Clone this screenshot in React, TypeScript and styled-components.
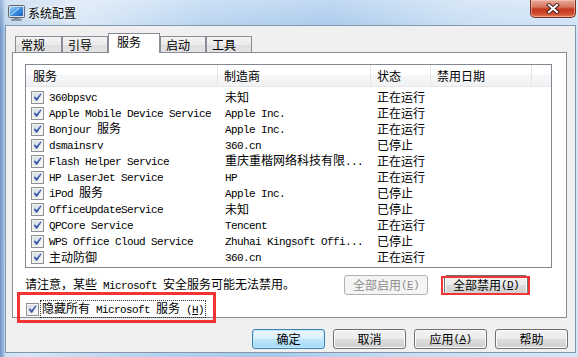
import React from 'react';
import styled, { createGlobalStyle, css } from 'styled-components';

const CJK = '"Noto Sans CJK SC", "Noto Sans CJK JP", "Liberation Sans", sans-serif';

const GlobalStyle = createGlobalStyle`
  html, body {
    margin: 0;
    padding: 0;
  }
  body {
    font-family: ${CJK};
    font-size: 12px;
    color: #000;
  }
`;

interface ServiceRow {
  name: string;
  vendor: string;
  status: string;
}

const services: ServiceRow[] = [
  { name: '360bpsvc', vendor: '未知', status: '正在运行' },
  { name: 'Apple Mobile Device Service', vendor: 'Apple Inc.', status: '正在运行' },
  { name: 'Bonjour 服务', vendor: 'Apple Inc.', status: '正在运行' },
  { name: 'dsmainsrv', vendor: '360.cn', status: '已停止' },
  { name: 'Flash Helper Service', vendor: '重庆重楷网络科技有限...', status: '正在运行' },
  { name: 'HP LaserJet Service', vendor: 'HP', status: '正在运行' },
  { name: 'iPod 服务', vendor: 'Apple Inc.', status: '已停止' },
  { name: 'OfficeUpdateService', vendor: '未知', status: '已停止' },
  { name: 'QPCore Service', vendor: 'Tencent', status: '正在运行' },
  { name: 'WPS Office Cloud Service', vendor: 'Zhuhai Kingsoft Offi...', status: '已停止' },
  { name: '主动防御', vendor: '360.cn', status: '正在运行' },
];

const tabs = [
  { label: '常规', width: 47 },
  { label: '引导', width: 46 },
  { label: '服务', width: 52, active: true },
  { label: '启动', width: 46 },
  { label: '工具', width: 46 },
];

const Frame = styled.div`
  position: relative;
  box-sizing: border-box;
  width: 578px;
  height: 357px;
  padding: 0 2px 4px 5px;
  display: flex;
  flex-direction: column;
  overflow: hidden;
  background:
    linear-gradient(180deg, rgba(255, 255, 255, 0.3), rgba(255, 255, 255, 0) 30px),
    linear-gradient(90deg, #6f93c4 0px, #9dbde2 4px, rgba(157, 189, 226, 0) 5px),
    linear-gradient(100deg, #bcd3ea 0%, #d6e6f6 14%, #b7d3f0 32%, #a8c9ec 52%, #c7ddf3 72%, #d5e6f7 100%);
`;

const TitleBar = styled.div`
  flex: none;
  height: 25px;
  display: flex;
  align-items: flex-start;
`;

const AppIcon = styled.svg`
  flex: none;
  margin: 5px 0 0 2px;
`;

const Title = styled.div`
  margin: 6px 0 0 2px;
  font-size: 12px;
  line-height: 14px;
  color: #000;
  text-shadow: 0 0 6px #fff, 0 0 10px rgba(255, 255, 255, 0.9);
`;

const CloseButton = styled.div`
  margin-left: auto;
  box-sizing: border-box;
  width: 46px;
  height: 18px;
  display: flex;
  align-items: center;
  justify-content: center;
  border: 1px solid #7a2f22;
  border-top: none;
  border-radius: 0 0 5px 5px;
  background: linear-gradient(180deg, #e9aa99 0%, #d77660 40%, #c4371f 55%, #cf4d31 80%, #e07a55 100%);
  box-shadow: inset 0 0 0 1px rgba(255, 220, 210, 0.45);
`;

const Client = styled.div`
  flex: 1;
  box-sizing: border-box;
  border: 1px solid #8397ad;
  background: #f0f0f0;
  padding: 7px 8px 3px 6px;
  display: flex;
  flex-direction: column;
`;

const TabStrip = styled.div`
  position: relative;
  z-index: 1;
  height: 19px;
  margin-left: 3px;
  display: flex;
  align-items: flex-end;
`;

const Tab = styled.div<{ $width: number; $active?: boolean }>`
  box-sizing: border-box;
  width: ${(p) => p.$width}px;
  height: 16px;
  padding: 0 0 0 5px;
  border: 1px solid #898c95;
  border-bottom: none;
  background: linear-gradient(180deg, #f3f3f3 0%, #ebebeb 50%, #dedede 51%, #e4e4e4 100%);
  font-size: 12px;
  line-height: 15px;
  ${(p) =>
    p.$active &&
    css`
      height: 20px;
      margin-bottom: -1px;
      padding-left: 8px;
      line-height: 16px;
      background: #fff;
    `}
`;

const Panel = styled.div`
  box-sizing: border-box;
  height: 266px;
  border: 1px solid #898c95;
  background: #fff;
  padding: 11px 14px 0 12px;
  display: flex;
  flex-direction: column;
`;

const ListBox = styled.div`
  box-sizing: border-box;
  height: 204px;
  border: 1px solid #828790;
  display: flex;
  flex-direction: column;
`;

const HeaderRow = styled.div`
  flex: none;
  height: 22px;
  box-sizing: border-box;
  display: flex;
  border-bottom: 1px solid #e5e5e5;
  background: linear-gradient(180deg, #ffffff 0%, #ffffff 45%, #f6f7f8 46%, #f1f2f4 100%);
`;

const HeaderCell = styled.div<{ $width?: number }>`
  box-sizing: border-box;
  ${(p) => (p.$width ? `width: ${p.$width}px;` : 'flex: 1;')}
  padding-left: ${(p) => (p.$width === 192 ? 7 : 6)}px;
  border-right: 1px solid #e3e5e8;
  font-size: 12px;
  line-height: 21px;
  white-space: nowrap;
  &:last-child {
    border-right: none;
  }
`;

const Rows = styled.div`
  padding: 2px 0 2px;
`;

const Row = styled.div`
  height: 16px;
  display: flex;
  align-items: center;
  line-height: 16px;
  white-space: nowrap;
`;

const NameCell = styled.div`
  box-sizing: border-box;
  width: 192px;
  padding-left: 5px;
  display: flex;
  align-items: center;
  gap: 5px;
`;

const Cell = styled.div<{ $width: number; $pad: number }>`
  box-sizing: border-box;
  width: ${(p) => p.$width}px;
  padding-left: ${(p) => p.$pad}px;
  overflow: hidden;
`;

const Latin = styled.span`
  font-family: "Liberation Mono", monospace;
  font-size: 11px;
  letter-spacing: -0.6px;
`;

const Han = styled.span`
  font-family: ${CJK};
  font-size: 12px;
`;

const ActionRow = styled.div`
  margin-top: 7px;
  height: 20px;
  display: flex;
  align-items: center;
`;

const Note = styled.div`
  flex: 1;
  line-height: 16px;
  white-space: nowrap;
`;

const ButtonPair = styled.div`
  display: flex;
  gap: 16px;
  margin-right: 24px;
`;

const PushButton = styled.div<{ $width: number; $disabled?: boolean; $default?: boolean }>`
  box-sizing: border-box;
  width: ${(p) => p.$width}px;
  height: 20px;
  display: flex;
  align-items: center;
  justify-content: center;
  border: 1px solid #707070;
  border-radius: 3px;
  background: linear-gradient(180deg, #f2f2f2 0%, #ebebeb 50%, #dddddd 51%, #cfcfcf 100%);
  box-shadow: inset 0 0 0 1px #fbfbfb;
  font-size: 12px;
  line-height: 16px;
  white-space: nowrap;
  ${(p) =>
    p.$disabled &&
    css`
      border-color: #adb2b5;
      background: #f4f4f4;
      box-shadow: none;
      color: #8d8d8d;
    `}
  ${(p) =>
    p.$default &&
    css`
      border-color: #3c7fb1;
      background: linear-gradient(180deg, #eaf6fd 0%, #d9f0fc 50%, #bee6fd 51%, #a7d9f5 100%);
      box-shadow: inset 0 0 0 1px #c4e9fb;
    `}
`;

const HideRow = styled.div`
  margin-top: 6px;
  height: 16px;
  display: flex;
  align-items: center;
  padding-left: 1px;
`;

const FocusLabel = styled.span`
  margin-left: 1px;
  padding: 0 1px;
  border: 1px dotted #333;
  line-height: 14px;
  white-space: nowrap;
`;

const Footer = styled.div`
  margin-top: 11px;
  margin-right: -1px;
  height: 20px;
  display: flex;
  justify-content: flex-end;
  gap: 8px;
`;

const Annotation = styled.div<{ $left: number; $top: number; $w: number; $h: number; $line: number }>`
  position: absolute;
  box-sizing: border-box;
  left: ${(p) => p.$left}px;
  top: ${(p) => p.$top}px;
  width: ${(p) => p.$w}px;
  height: ${(p) => p.$h}px;
  border: ${(p) => p.$line}px solid #f23434;
  pointer-events: none;
`;

const HAN_RE = /([\u3000-\u9fff\uff00-\uffef]+)/;

const Mixed = ({ text }: { text: string }) => (
  <>
    {text
      .split(HAN_RE)
      .filter(Boolean)
      .map((part, i) =>
        HAN_RE.test(part) ? <Han key={i}>{part}</Han> : <Latin key={i}>{part}</Latin>
      )}
  </>
);

const CheckBox = () => (
  <svg width="13" height="13" viewBox="0 0 13 13" style={{ flex: 'none' }}>
    <defs>
      <linearGradient id="cbFill" x1="0" y1="0" x2="1" y2="1">
        <stop offset="0" stopColor="#d6d9de" />
        <stop offset="1" stopColor="#fbfbfb" />
      </linearGradient>
      <linearGradient id="cbTick" x1="0" y1="0" x2="0" y2="1">
        <stop offset="0" stopColor="#5a78c4" />
        <stop offset="1" stopColor="#2c4a93" />
      </linearGradient>
    </defs>
    <rect x="0.5" y="0.5" width="12" height="12" fill="#f5f5f5" stroke="#8e8f8f" />
    <rect x="2" y="2" width="9" height="9" fill="url(#cbFill)" />
    <path d="M2.6 6.4 L4.2 5.2 L5.6 7.2 L9.4 2.2 L10.6 3.2 L5.7 10.2 Z" fill="url(#cbTick)" />
  </svg>
);

const MonitorIcon = () => (
  <AppIcon width="19" height="16" viewBox="0 0 19 16">
    <defs>
      <linearGradient id="scr" x1="0" y1="0" x2="1" y2="1">
        <stop offset="0" stopColor="#9fd3fb" />
        <stop offset="0.5" stopColor="#3a8fe0" />
        <stop offset="1" stopColor="#1d5fb8" />
      </linearGradient>
    </defs>
    <rect x="1.5" y="0.5" width="16" height="12" rx="1" fill="#d9dde3" stroke="#5d6878" />
    <rect x="3" y="2" width="13" height="9" fill="url(#scr)" />
    <path d="M4 10 L12 3" stroke="#ffffff" strokeWidth="1" opacity="0.8" />
    <rect x="7" y="12.5" width="5" height="1.5" fill="#7d8797" />
    <rect x="4.5" y="14" width="10" height="1.5" rx="0.5" fill="#9aa3b0" stroke="#5d6878" strokeWidth="0.5" />
  </AppIcon>
);

const CloseGlyph = () => (
  <svg width="14" height="11" viewBox="0 0 14 11">
    <path d="M3 2 L11 9 M11 2 L3 9" stroke="#4a1f18" strokeWidth="4" strokeLinecap="square" />
    <path d="M3 2 L11 9 M11 2 L3 9" stroke="#ffffff" strokeWidth="2" strokeLinecap="square" />
  </svg>
);

const Mnemonic = ({ label, letter }: { label: string; letter: string }) => (
  <>
    <Han>{label}</Han>
    <Latin>
      {' ('}
      <u>{letter}</u>
      {')'}
    </Latin>
  </>
);

export default function App() {
  return (
    <>
      <GlobalStyle />
      <Frame>
        <TitleBar>
          <MonitorIcon />
          <Title>系统配置</Title>
          <CloseButton>
            <CloseGlyph />
          </CloseButton>
        </TitleBar>

        <Client>
          <TabStrip>
            {tabs.map((t) => (
              <Tab key={t.label} $width={t.width} $active={t.active}>
                {t.label}
              </Tab>
            ))}
          </TabStrip>

          <Panel>
            <ListBox>
              <HeaderRow>
                <HeaderCell $width={192}>服务</HeaderCell>
                <HeaderCell $width={153}>制造商</HeaderCell>
                <HeaderCell $width={60}>状态</HeaderCell>
                <HeaderCell $width={101}>禁用日期</HeaderCell>
                <HeaderCell />
              </HeaderRow>
              <Rows>
                {services.map((s) => (
                  <Row key={s.name}>
                    <NameCell>
                      <CheckBox />
                      <span>
                        <Mixed text={s.name} />
                      </span>
                    </NameCell>
                    <Cell $width={153} $pad={7}>
                      <Mixed text={s.vendor} />
                    </Cell>
                    <Cell $width={60} $pad={6}>
                      <Han>{s.status}</Han>
                    </Cell>
                  </Row>
                ))}
              </Rows>
            </ListBox>

            <ActionRow>
              <Note>
                <Mixed text="请注意，某些 Microsoft 安全服务可能无法禁用。" />
              </Note>
              <ButtonPair>
                <PushButton $width={84} $disabled>
                  <Mnemonic label="全部启用" letter="E" />
                </PushButton>
                <PushButton $width={84}>
                  <Mnemonic label="全部禁用" letter="D" />
                </PushButton>
              </ButtonPair>
            </ActionRow>

            <HideRow>
              <CheckBox />
              <FocusLabel>
                <Han>隐藏所有</Han>
                <Latin> Microsoft </Latin>
                <Mnemonic label="服务" letter="H" />
              </FocusLabel>
            </HideRow>
          </Panel>

          <Footer>
            <PushButton $width={73} $default>
              确定
            </PushButton>
            <PushButton $width={73}>取消</PushButton>
            <PushButton $width={73}>
              <Mnemonic label="应用" letter="A" />
            </PushButton>
            <PushButton $width={73}>帮助</PushButton>
          </Footer>
        </Client>

        <Annotation $left={17} $top={292} $w={199} $h={31} $line={3} />
        <Annotation $left={441} $top={276} $w={89} $h={19} $line={2} />
      </Frame>
    </>
  );
}
